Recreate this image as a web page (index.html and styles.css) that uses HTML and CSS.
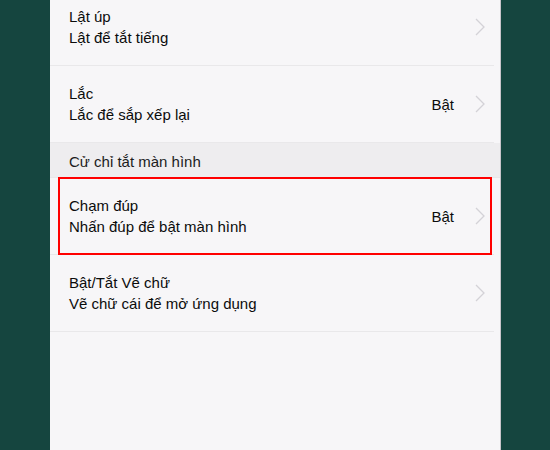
FILE: index.html
```html
<!DOCTYPE html>
<html lang="vi">
<head>
    <meta charset="UTF-8">
    <meta name="viewport" content="width=device-width, initial-scale=1.0">
    <title>Cử chỉ</title>
    <link rel="stylesheet" href="styles.css">
</head>
<body>
    <div class="screen">
        <div class="row">
            <div class="row-text">
                <div class="row-title">Lật úp</div>
                <div class="row-sub">Lật để tắt tiếng</div>
            </div>
            <svg class="chevron" viewBox="0 0 10 18"><path d="M1 1l8 8-8 8"/></svg>
        </div>

        <div class="row">
            <div class="row-text">
                <div class="row-title">Lắc</div>
                <div class="row-sub">Lắc để sắp xếp lại</div>
            </div>
            <span class="row-value">Bật</span>
            <svg class="chevron" viewBox="0 0 10 18"><path d="M1 1l8 8-8 8"/></svg>
        </div>

        <div class="section-header">Cử chỉ tắt màn hình</div>

        <div class="row highlighted">
            <div class="row-text">
                <div class="row-title">Chạm đúp</div>
                <div class="row-sub">Nhấn đúp để bật màn hình</div>
            </div>
            <span class="row-value">Bật</span>
            <svg class="chevron" viewBox="0 0 10 18"><path d="M1 1l8 8-8 8"/></svg>
        </div>

        <div class="row">
            <div class="row-text">
                <div class="row-title">Bật/Tắt Vẽ chữ</div>
                <div class="row-sub">Vẽ chữ cái để mở ứng dụng</div>
            </div>
            <svg class="chevron" viewBox="0 0 10 18"><path d="M1 1l8 8-8 8"/></svg>
        </div>
    </div>
</body>
</html>
```

FILE: styles.css
```css
body {
    margin: 0;
    background-color: #15453f;
    font-family: "Liberation Sans", Arial, sans-serif;
    height: 450px;
    overflow: hidden;
}
.screen {
    width: 450px;
    height: 480px;
    margin: -11px 0 0 50px;
    background-color: #f7f6f8;
    box-shadow: 1px 0 0 #c8c4ca;
}
.row {
    position: relative;
    display: flex;
    align-items: center;
    height: 76px;
    padding: 0 9px 0 19px;
    border-bottom: 1px solid #e9e8ea;
    margin-right: 6px;
}
.row-text {
    flex: 1;
}
.row-title,
.row-sub {
    font-size: 15px;
    line-height: 21px;
    color: #0c0c0c;
}
.row-value {
    font-size: 15px;
    color: #0c0c0c;
    margin-right: 21px;
}
.chevron {
    width: 10px;
    height: 18px;
    fill: none;
    stroke: #d4d2d7;
    stroke-width: 1.3;
}
.section-header {
    height: 34px;
    line-height: 37px;
    padding-left: 19px;
    font-size: 15px;
    color: #1c1c1c;
    background-color: #eeedef;
    border-bottom: 1px solid #e9e8ea;
}
.highlighted::after {
    content: "";
    position: absolute;
    left: 8px;
    right: 2px;
    top: -1px;
    bottom: -1px;
    border: 2px solid #f00;
}
```
